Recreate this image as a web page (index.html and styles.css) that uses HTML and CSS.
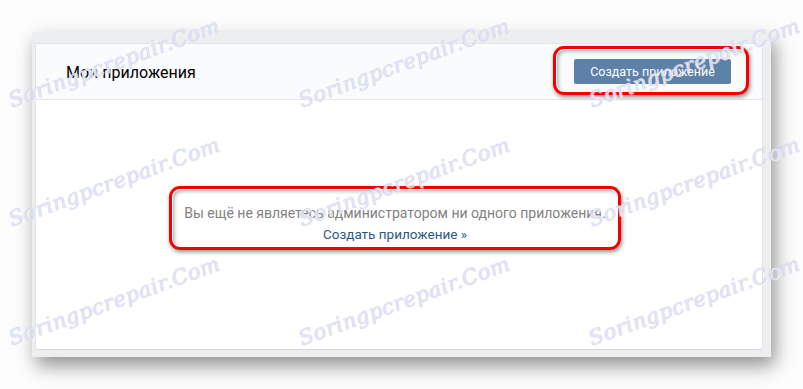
FILE: index.html
```html
<!DOCTYPE html>
<html lang="ru">
<head>
<meta charset="utf-8">
<title>Мои приложения</title>
<link rel="stylesheet" href="styles.css">
</head>
<body>
<div class="frame">
  <div class="card">
    <div class="card-header">
      <h1 class="card-title">Мои приложения</h1>
      <div class="highlight highlight-btn">
        <button class="btn" type="button">Создать приложение</button>
      </div>
    </div>
    <div class="card-body">
      <div class="highlight highlight-msg">
        <p class="empty-text">Вы ещё не являетесь администратором ни одного приложения.</p>
        <a class="empty-link" href="#">Создать приложение »</a>
      </div>
    </div>
  </div>
</div>
<div class="watermarks" aria-hidden="true">
  <span class="wm">Soringpcrepair.Com</span>
  <span class="wm">Soringpcrepair.Com</span>
  <span class="wm">Soringpcrepair.Com</span>
  <span class="wm">Soringpcrepair.Com</span>
  <span class="wm">Soringpcrepair.Com</span>
  <span class="wm">Soringpcrepair.Com</span>
  <span class="wm">Soringpcrepair.Com</span>
  <span class="wm">Soringpcrepair.Com</span>
  <span class="wm">Soringpcrepair.Com</span>
</div>
</body>
</html>
```
FILE: styles.css
```css
* { box-sizing: border-box; }

html, body {
  margin: 0;
  padding: 0;
  background: #fdfdfd;
  width: 803px;
  height: 389px;
  overflow: hidden;
}

body {
  position: relative;
  font-family: Roboto, "Open Sans", "Liberation Sans", sans-serif;
  padding: 32px 0 0 32px;
}

.frame {
  width: 739px;
  height: 325px;
  background: #edeef0;
  padding: 12px 9px 8px 4px;
  box-shadow: 4px 9px 18px rgba(0, 0, 0, 0.42);
}

.card {
  height: 100%;
  background: #fff;
  border-radius: 2px;
  box-shadow: 0 1px 0 0 #d7d8db, 0 0 0 1px #e3e4e8;
  display: flex;
  flex-direction: column;
}

.card-header {
  height: 56px;
  flex: none;
  background: #fafbfc;
  border-bottom: 1px solid #e7e8ec;
  display: flex;
  align-items: center;
  justify-content: space-between;
  padding: 0 13px 0 30px;
}

.card-title {
  margin: 0;
  font-size: 16px;
  font-weight: 400;
  color: #000;
  position: relative;
  top: 1px;
}

.highlight {
  border: 3px solid #f50000;
  border-radius: 11px;
  box-shadow: 1px 2px 4px rgba(0, 0, 0, 0.45),
              inset 0 0 0 1px #ffffff,
              inset 2px 2px 4px rgba(0, 0, 0, 0.35);
}

.highlight-btn {
  padding: 10px 15px 8px 18px;
  margin-top: -2px;
}

.btn {
  display: block;
  width: 157px;
  height: 25px;
  border: 0;
  border-radius: 2px;
  background: #5e81a8;
  color: #fff;
  font-family: inherit;
  font-size: 12.5px;
  padding: 0;
  line-height: 25px;
}

.card-body {
  flex: 1;
  display: flex;
  justify-content: center;
  align-items: flex-start;
  padding-top: 86px;
  padding-right: 8px;
}

.highlight-msg {
  width: 452px;
  height: 64px;
  padding-top: 14px;
  text-align: center;
}

.empty-text {
  margin: 0;
  font-size: 14px;
  line-height: 21px;
  color: #828282;
}

.empty-link {
  display: inline-block;
  font-size: 13.5px;
  line-height: 20px;
  color: #2a5885;
  text-decoration: none;
}

.watermarks {
  position: absolute;
  top: 3px;
  left: -30px;
  display: grid;
  grid-template-columns: repeat(3, 290px);
  grid-template-rows: repeat(3, 119px);
  pointer-events: none;
}

.wm {
  justify-self: center;
  align-self: center;
  transform: rotate(-20deg);
  font-family: "DejaVu Serif", "Liberation Serif", serif;
  font-style: italic;
  font-weight: 400;
  font-size: 21px;
  letter-spacing: 0.5px;
  white-space: nowrap;
  color: rgba(236, 238, 250, 0.85);
  text-shadow: 0 0 1px rgba(140, 150, 205, 0.75), 1px 1px 0 rgba(255, 255, 255, 0.8);
}
```
